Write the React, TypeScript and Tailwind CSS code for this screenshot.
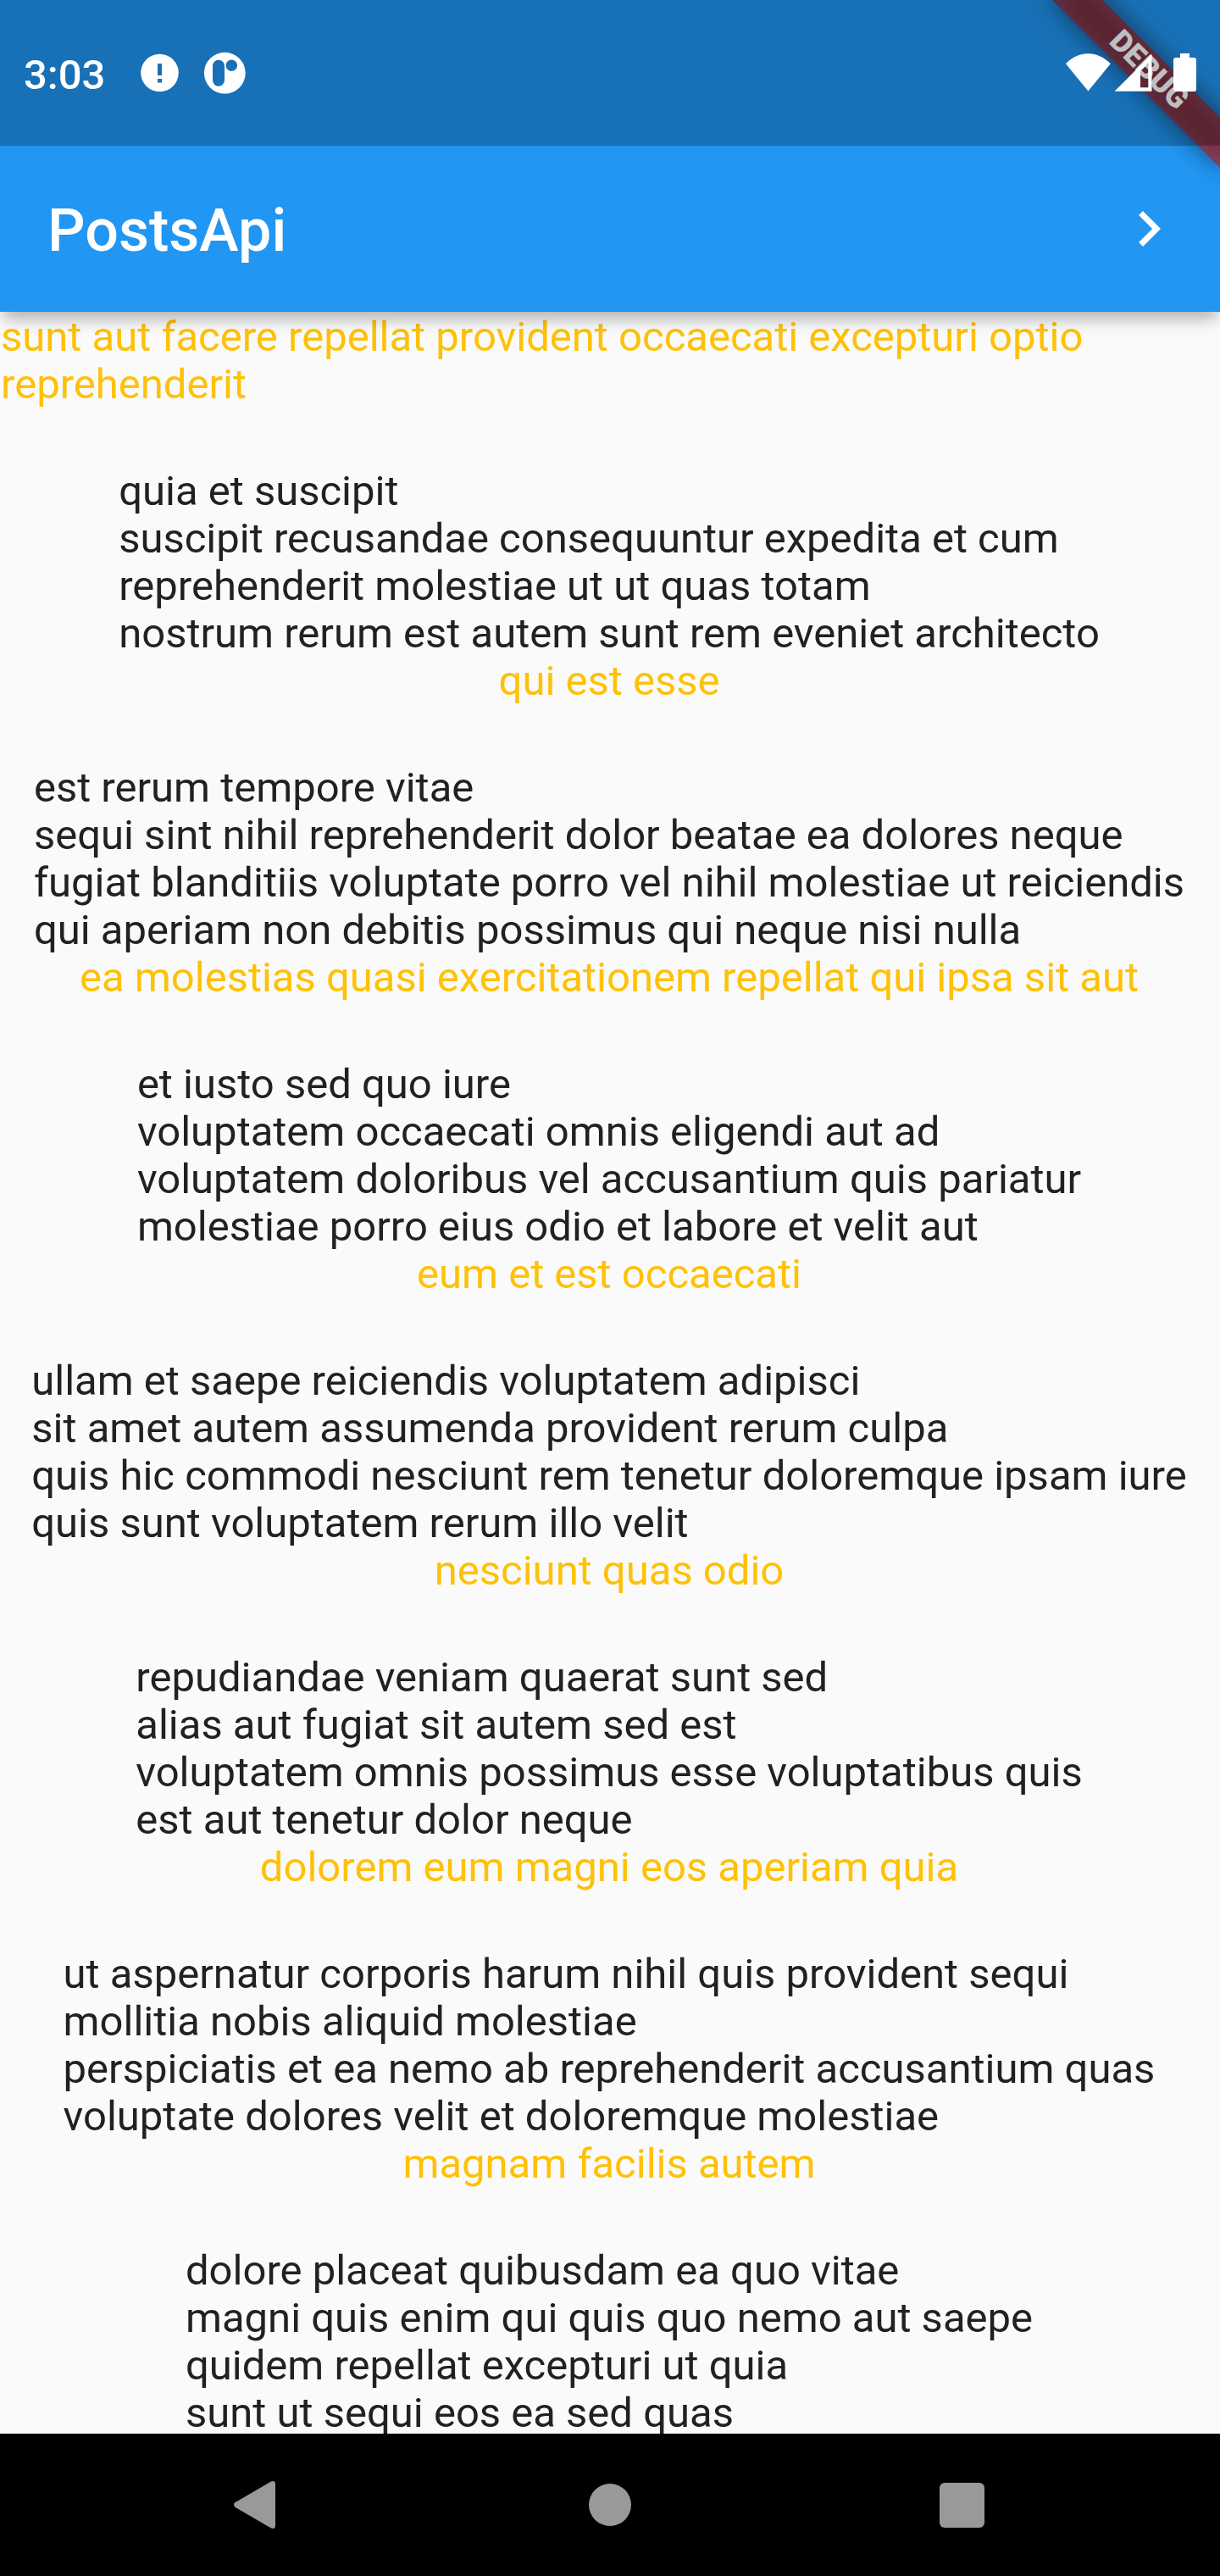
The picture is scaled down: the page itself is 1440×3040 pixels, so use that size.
const posts = [
  {
    title: "sunt aut facere repellat provident occaecati excepturi optio reprehenderit",
    body: ["quia et suscipit", "suscipit recusandae consequuntur expedita et cum", "reprehenderit molestiae ut ut quas totam", "nostrum rerum est autem sunt rem eveniet architecto"],
  },
  {
    title: "qui est esse",
    body: ["est rerum tempore vitae", "sequi sint nihil reprehenderit dolor beatae ea dolores neque", "fugiat blanditiis voluptate porro vel nihil molestiae ut reiciendis", "qui aperiam non debitis possimus qui neque nisi nulla"],
  },
  {
    title: "ea molestias quasi exercitationem repellat qui ipsa sit aut",
    body: ["et iusto sed quo iure", "voluptatem occaecati omnis eligendi aut ad", "voluptatem doloribus vel accusantium quis pariatur", "molestiae porro eius odio et labore et velit aut"],
  },
  {
    title: "eum et est occaecati",
    body: ["ullam et saepe reiciendis voluptatem adipisci", "sit amet autem assumenda provident rerum culpa", "quis hic commodi nesciunt rem tenetur doloremque ipsam iure", "quis sunt voluptatem rerum illo velit"],
  },
  {
    title: "nesciunt quas odio",
    body: ["repudiandae veniam quaerat sunt sed", "alias aut fugiat sit autem sed est", "voluptatem omnis possimus esse voluptatibus quis", "est aut tenetur dolor neque"],
  },
  {
    title: "dolorem eum magni eos aperiam quia",
    body: ["ut aspernatur corporis harum nihil quis provident sequi", "mollitia nobis aliquid molestiae", "perspiciatis et ea nemo ab reprehenderit accusantium quas", "voluptate dolores velit et doloremque molestiae"],
  },
  {
    title: "magnam facilis autem",
    body: ["dolore placeat quibusdam ea quo vitae", "magni quis enim qui quis quo nemo aut saepe", "quidem repellat excepturi ut quia", "sunt ut sequi eos ea sed quas"],
  },
];

function DebugBanner() {
  return (
    <div className="pointer-events-none absolute inset-x-0 top-0 h-[368px] overflow-hidden">
      <div className="absolute top-[98px] left-[1300px] h-[42px] w-[280px] origin-[140px_-98px] rotate-45 bg-black/50 blur-[14px]" />
      <div className="absolute top-[98px] left-[1300px] flex h-[42px] w-[280px] origin-[140px_-98px] rotate-45 items-center justify-center bg-[#b71c1c]/63 pr-[2px] pb-[3px] text-[35.7px] leading-none font-black text-white">
        DEBUG
      </div>
    </div>
  );
}

function StatusBar() {
  return (
    <div className="absolute inset-x-0 top-0 flex h-[172px] items-center justify-between bg-black/25 pr-[27px] pl-[28px] text-white">
      <div className="flex items-center">
        <span className="w-[138px] pt-[6px] text-[49px] leading-[56px] font-medium">3:03</span>
        <svg className="h-[46px] w-[46px]" viewBox="0 0 46 46">
          <circle cx="22.5" cy="23" r="22.3" fill="white" />
          <path d="M20 12h5v14h-5zM20 30h5v4.500h-5z" fill="#1970b6" />
        </svg>
        <svg className="ml-[28px] h-[50px] w-[50px]" viewBox="0 0 50 50">
          <circle cx="25.3" cy="25.2" r="24.4" fill="white" />
          <rect x="11" y="9.7" width="14" height="31" rx="7" fill="#1970b6" />
          <circle cx="33.3" cy="16.3" r="6.7" fill="#1970b6" />
        </svg>
      </div>
      <svg className="h-[46px] w-[156px]" viewBox="0 0 156 46">
        <path d="M1 12.3C8.500 4.500 17.500 0.200 27.400 0.200S46.300 4.500 53.800 12.300L27.400 44.500Z" fill="white" />
        <path fillRule="evenodd" d="M58.500 44.800L102.500 0.800V44.800ZM89 20.800V40.300H98.300V11.500Z" fill="white" />
        <path d="M136 0h11v5h5q3 0 3 3v34q0 3-3 3h-21q-3 0-3-3V8q0-3 3-3h5z" fill="white" />
      </svg>
    </div>
  );
}

function NavigationBar() {
  return (
    <nav className="relative z-10 flex h-[168px] shrink-0 items-center bg-black pl-[275px]">
      <svg className="h-[58px] w-[51px]" viewBox="0 0 51 58">
        <path d="M2.500 26.300L44.500 1.700Q50 -0.500 50 4.500V53.500Q50 58.500 44.500 56.300L2.500 31.700Q-0.500 29 2.500 26.300Z" fill="#999" />
      </svg>
      <div className="ml-[369px] h-[50px] w-[50px] rounded-full bg-[#999]" />
      <div className="ml-[363.5px] h-[53px] w-[53px] rounded-[6px] bg-[#999]" />
    </nav>
  );
}

export default function App() {
  return (
    <div className="relative flex h-[3040px] w-[1440px] flex-col overflow-hidden bg-[#fafafa] font-['Roboto',sans-serif]">
      <header className="relative z-10 flex h-[368px] shrink-0 items-center justify-between bg-[#2196f3] pt-[172px] pr-[42px] pl-[56px] text-white shadow-[0_12px_18px_-4px_rgba(0,0,0,0.3)]">
        <h1 className="pt-[4px] text-[70px] leading-[82px] font-medium">PostsApi</h1>
        <svg className="h-[84px] w-[84px]" viewBox="0 0 24 24" fill="white">
          <path d="M10 6L8.590 7.410 13.170 12l-4.580 4.590L10 18l6-6z" />
        </svg>
        <DebugBanner />
        <StatusBar />
      </header>
      <main className="min-h-0 flex-1 overflow-hidden pt-[2px] pr-[3px] pl-[1px] text-[49px] leading-[56px] text-[#212121]">
        {posts.map((post) => (
          <article key={post.title} className="flex flex-col items-center">
            <h2 className="mb-[70px] text-[#ffc107]">{post.title}</h2>
            <div className="whitespace-nowrap">
              {post.body.map((line) => (
                <p key={line}>{line}</p>
              ))}
            </div>
          </article>
        ))}
      </main>
      <NavigationBar />
    </div>
  );
}
